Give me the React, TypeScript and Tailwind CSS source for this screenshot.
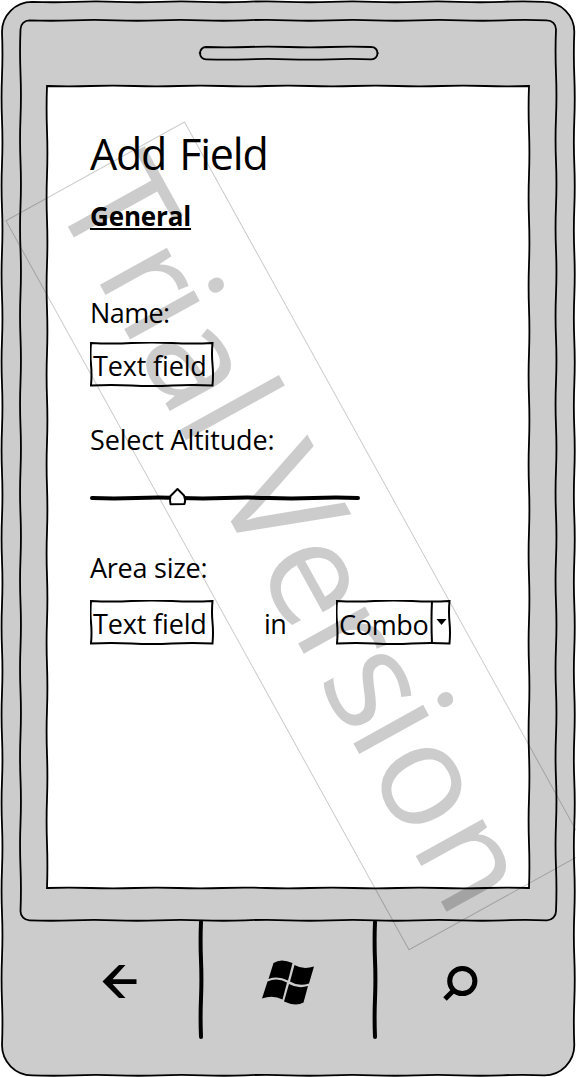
import type { ReactNode } from "react";

type Pt = [number, number];

/* Hand-drawn edge: short quadratic segments whose ends sway round the straight line. */
function edge([x1, y1]: Pt, [x2, y2]: Pt, amp = 0.6, step = 44): string {
  const len = Math.hypot(x2 - x1, y2 - y1);
  const n = Math.max(2, Math.round(len / step));
  const nx = -(y2 - y1) / len;
  const ny = (x2 - x1) / len;
  let d = "";
  for (let i = 1; i <= n; i++) {
    const m = (i - 0.5) / n;
    const t = i / n;
    const o = (i % 2 ? 2 : -2) * amp;
    d += ` Q${(x1 + (x2 - x1) * m + nx * o).toFixed(2)} ${(y1 + (y2 - y1) * m + ny * o).toFixed(2)} ${(x1 + (x2 - x1) * t).toFixed(2)} ${(y1 + (y2 - y1) * t).toFixed(2)}`;
  }
  return d;
}

function box(l: number, t: number, r: number, b: number, rad: number, amp = 0.6, step = 44): string {
  const a = (x: number, y: number) => (rad ? ` A${rad} ${rad} 0 0 1 ${x} ${y}` : "");
  return (
    `M${l + rad} ${t}` +
    edge([l + rad, t], [r - rad, t], amp, step) +
    a(r, t + rad) +
    edge([r, t + rad], [r, b - rad], amp, step) +
    a(r - rad, b) +
    edge([r - rad, b], [l + rad, b], amp, step) +
    a(l, b - rad) +
    edge([l, b - rad], [l, t + rad], amp, step) +
    a(l + rad, t) +
    "Z"
  );
}

function PhoneBody() {
  return (
    <svg className="absolute inset-0" width="576" height="1077" viewBox="0 0 576 1077" fill="none" stroke="#000" strokeWidth="1.8">
      <path d={box(2, 1.8, 574.3, 1075.3, 30, 0.45)} fill="#ccc" />
      <path d={box(20.5, 20.3, 556, 920.3, 9, 0.45)} />
      <path d={box(200, 47, 377.5, 59.3, 6, 0.4)} />
      <path d={box(47, 86, 529, 888, 0, 0.4)} fill="#fff" />
      <g strokeWidth="4" strokeLinecap="round">
        <path d={"M201 922" + edge([201, 922], [201, 1037], 0.4)} />
        <path d={"M375 922" + edge([375, 922], [375, 1037], 0.4)} />
      </g>
    </svg>
  );
}

const glyphs: [string, number, number][] = [
  ["T", 0.5, 149],
  ["r", 89.3, 143],
  ["i", 139.2, 149],
  ["a", 176.5, 146],
  ["l", 254.2, 149],
  ["V", 333, 153],
  ["e", 422, 145],
  ["r", 499, 143],
  ["s", 551, 145],
  ["i", 612.8, 149],
  ["o", 652, 145],
  ["n", 742, 143],
];

function Watermark() {
  return (
    <svg className="pointer-events-none absolute inset-0" width="576" height="1077" viewBox="0 0 576 1077">
      <g transform="matrix(0.4838 0.8752 -0.8752 0.4838 184.5 122)">
        <rect width="833" height="204" fill="none" stroke="#000" strokeOpacity="0.2" />
        <text y="152.8" className="font-['Open_Sans',sans-serif]" fill="#000" fillOpacity="0.2">
          {glyphs.map(([g, x, size], i) => (
            <tspan key={i} x={x} fontSize={size}>
              {g}
            </tspan>
          ))}
        </text>
      </g>
    </svg>
  );
}

function Field({ width, children, split }: { width: number; children: ReactNode; split?: boolean }) {
  return (
    <div className="relative flex h-[45px]" style={{ width }}>
      <svg className="absolute inset-0" width={width} height="45" fill="none" stroke="#000" strokeWidth="2">
        <path d={box(1, 1, width - 1.5, 43.5, 0, 0.5, 40)} />
        {split && <path d="M96 1Q95 20 96 43.500" />}
        {split && <path d="M100.5 19h10l-5 6z" fill="#000" stroke="none" />}
      </svg>
      {children}
    </div>
  );
}

export default function App() {
  return (
    <div className="relative flex h-[1077px] w-[576px] flex-col overflow-hidden bg-white font-['Open_Sans',sans-serif] text-[27px] leading-8 whitespace-nowrap text-black">
      <PhoneBody />
      <main className="relative flex h-[920px] flex-col items-start pt-[130px] pl-[90px]">
        <h1 className="text-[43px] leading-[48px] tracking-[-1.2px] [word-spacing:3px]">Add Field</h1>
        <h2 className="mt-[22px] text-[26px] font-bold tracking-[-0.15px] underline decoration-2 underline-offset-[2px]">General</h2>
        <label className="mt-[65px] tracking-[-0.6px]">Name:</label>
        <div className="mt-[13px]">
          <Field width={124}>
            <span className="pt-[8px] pl-[3px] tracking-[-0.15px]">Text field</span>
          </Field>
        </div>
        <label className="mt-[37px] tracking-[-0.15px]">Select Altitude:</label>
        <svg className="mt-[30px]" width="272" height="20" fill="none" stroke="#000">
          <path d={"M2 12" + edge([2, 12], [268, 12], 0.4)} strokeWidth="4" strokeLinecap="round" />
          <path d="M87.5 3L94 9.5Q96 14 94.5 18L80.5 18.300Q79.500 14 80.500 10Z" fill="#fff" strokeWidth="2" strokeLinejoin="round" />
        </svg>
        <label className="mt-[46px] tracking-[-0.25px]">Area size:</label>
        <div className="mt-[16px] flex">
          <Field width={124}>
            <span className="pt-[8px] pl-[3px] tracking-[-0.15px]">Text field</span>
          </Field>
          <span className="mt-[8px] ml-[50px] w-[72px] tracking-[-0.5px]">in</span>
          <Field width={115} split>
            <span className="pt-[9px] pl-[3px] tracking-[-0.3px]">Combo</span>
          </Field>
        </div>
      </main>
      <nav className="relative flex h-[157px] items-start pt-[40px] pl-[102px]">
        <svg width="36" height="48" viewBox="0 0 36 48">
          <path d="M0.500 21.500L17 5H23.500L10.500 19.200H34.500V24H10.500L23.500 38H17Z" fill="#000" />
        </svg>
        <svg className="ml-[123px]" width="56" height="48" viewBox="0 0 56 48">
          <path d="M12.500 3Q20-2 31.500 3L27 20.500Q17 15.500 7.500 19Z" fill="#000" />
          <path d="M33.500 5Q42 10 53 6.500L48 23.500Q38 27 29 21.500Z" fill="#000" />
          <path d="M6.500 21.500Q16 17 26 22.500L21.500 39.500Q12 34.500 1 38.500Z" fill="#000" />
          <path d="M28 24Q37 29 47 26L42.500 42.500Q35 47 23 41.500Z" fill="#000" />
        </svg>
        <svg className="ml-[125px]" width="38" height="48" viewBox="0 0 38 48" fill="none" stroke="#000">
          <circle cx="20.300" cy="21" r="12.600" strokeWidth="5" />
          <path d="M11.500 30.500L3 39" strokeWidth="5" />
        </svg>
      </nav>
      <Watermark />
    </div>
  );
}
